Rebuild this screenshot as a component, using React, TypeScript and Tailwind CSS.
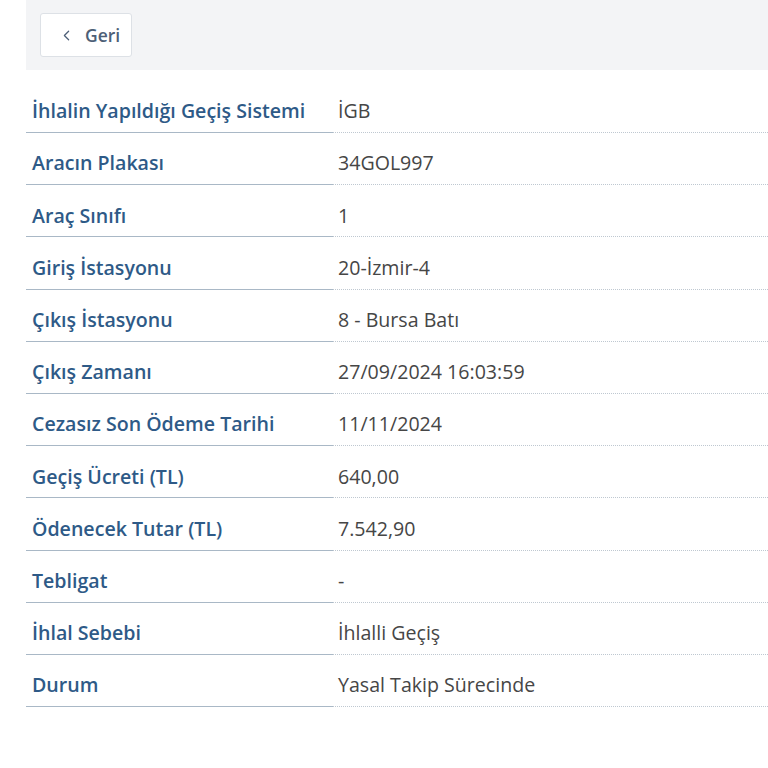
import { ChevronLeft } from "lucide-react";

const rows: [string, string][] = [
  ["İhlalin Yapıldığı Geçiş Sistemi", "İGB"],
  ["Aracın Plakası", "34GOL997"],
  ["Araç Sınıfı", "1"],
  ["Giriş İstasyonu", "20-İzmir-4"],
  ["Çıkış İstasyonu", "8 - Bursa Batı"],
  ["Çıkış Zamanı", "27/09/2024 16:03:59"],
  ["Cezasız Son Ödeme Tarihi", "11/11/2024"],
  ["Geçiş Ücreti (TL)", "640,00"],
  ["Ödenecek Tutar (TL)", "7.542,90"],
  ["Tebligat", "-"],
  ["İhlal Sebebi", "İhlalli Geçiş"],
  ["Durum", "Yasal Takip Sürecinde"],
];

const App = () => {
  return (
    <div className="min-h-[768px] bg-white font-['Open_Sans',sans-serif]">
      <div className="ml-[26px] flex h-[70px] items-center bg-[#f3f4f6] pl-[14px]">
        <button className="flex h-[44px] items-center gap-[10px] rounded-[3px] border border-[#dde1e6] bg-white pl-[17px] pr-[11px] text-[17.5px] font-semibold text-[#4d5f77]">
          <ChevronLeft size={17} strokeWidth={1.75} />
          Geri
        </button>
      </div>
      <div className="ml-[26px] mt-[10px]">
        {rows.map(([label, value], i) => (
          <div key={label} className={i === 0 ? "flex h-[53px]" : "flex h-[52.2px]"}>
            <div className="flex w-[307px] shrink-0 items-center border-b border-[#a9b8c6] pl-[6px] pt-[9px] text-[19.6px] font-semibold text-[#2e5a87]">
              {label}
            </div>
            <div className="flex flex-1 items-center border-b border-dotted border-[#bfc8d1] pl-[5px] pt-[9px] text-[19.6px] text-[#464646]">
              {value}
            </div>
          </div>
        ))}
      </div>
    </div>
  );
};

export default App;
